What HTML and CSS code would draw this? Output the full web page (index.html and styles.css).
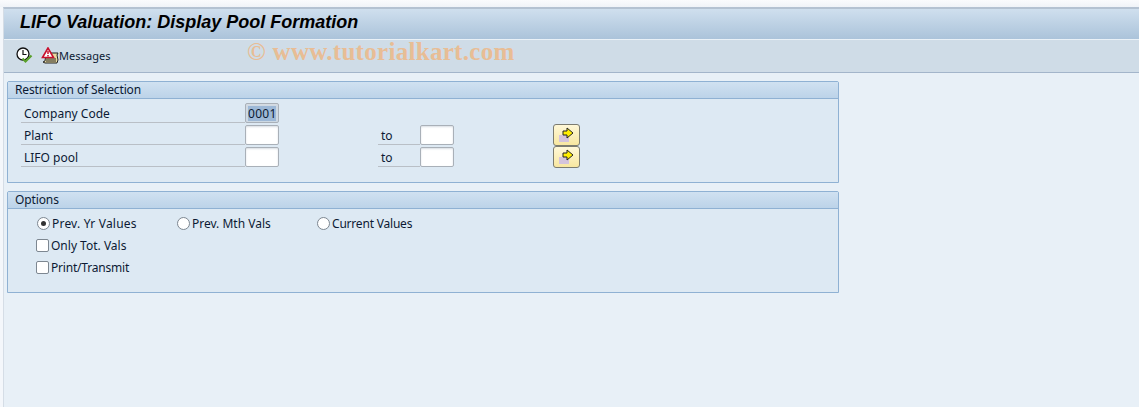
FILE: index.html
```html
<!DOCTYPE html>
<html lang="en">
<head>
<meta charset="utf-8">
<title>LIFO Valuation: Display Pool Formation</title>
<link rel="stylesheet" href="styles.css">
</head>
<body>
<div class="top-strip"></div>
<div class="window">
  <header class="titlebar"><h1 class="title">LIFO Valuation: Display Pool Formation</h1></header>
  <div class="toolbar">
    <svg class="tool-icon clock" width="18" height="18" viewBox="0 0 18 18">
      <circle cx="7" cy="7" r="6" fill="#fff" stroke="#111" stroke-width="1.3"/>
      <path d="M7 3V7.500H10.500" fill="none" stroke="#111" stroke-width="1.2"/>
      <path d="M6.500 11.500l3 3 6-6" fill="none" stroke="#5aa02c" stroke-width="2.200"/>
    </svg>
    <svg class="tool-icon msg" width="18" height="18" viewBox="0 0 18 18">
      <path d="M5 6h12l-1 2 1 5-1 3H4l-2-1 2-1z" fill="#e8d9a0" stroke="#222" stroke-width="1"/>
      <path d="M5 12h10M5 14h10" stroke="#222" stroke-width="1"/>
      <path d="M7 1L1.500 10.500h11z" fill="#fff" stroke="#c8102e" stroke-width="1.600"/>
      <path d="M7 4v3M7 8v1.500" stroke="#c8102e" stroke-width="1.500"/>
    </svg>
    <span class="tool-label">Messages</span>
    <span class="watermark">© www.tutorialkart.com</span>
  </div>
  <main class="content">
    <section class="group group-selection">
      <h2 class="group-head">Restriction of Selection</h2>
      <div class="sel-rows">
        <div class="sel-row">
          <label class="field-label">Company Code</label>
          <div class="input input-filled"><span class="selected">0001</span></div>
        </div>
        <div class="sel-row">
          <label class="field-label">Plant</label>
          <div class="input"></div>
          <label class="to-label">to</label>
          <div class="input"></div>
          <button class="arrow-btn" type="button">
            <svg width="18" height="17" viewBox="0 0 18 17"><rect x="1" y="8" width="10" height="7" fill="#d4c4dc"/><path d="M5 4h4V1l6 5-6 5V8H5z" fill="#ffee00" stroke="#222" stroke-width="1"/></svg>
          </button>
        </div>
        <div class="sel-row">
          <label class="field-label">LIFO pool</label>
          <div class="input"></div>
          <label class="to-label">to</label>
          <div class="input"></div>
          <button class="arrow-btn" type="button">
            <svg width="18" height="17" viewBox="0 0 18 17"><rect x="1" y="8" width="10" height="7" fill="#d4c4dc"/><path d="M5 4h4V1l6 5-6 5V8H5z" fill="#ffee00" stroke="#222" stroke-width="1"/></svg>
          </button>
        </div>
      </div>
    </section>
    <section class="group group-options">
      <h2 class="group-head">Options</h2>
      <div class="opt-rows">
        <div class="opt-row">
          <span class="opt opt-w1"><span class="radio radio-on"></span><span class="wide">Prev. Yr Values</span></span>
          <span class="opt opt-w2"><span class="radio"></span>Prev. Mth Vals</span>
          <span class="opt"><span class="radio"></span><span class="narrow">Current Values</span></span>
        </div>
        <div class="opt-row"><span class="opt"><span class="check"></span>Only Tot. Vals</span></div>
        <div class="opt-row"><span class="opt"><span class="check"></span><span class="narrow">Print/Transmit</span></span></div>
      </div>
    </section>
  </main>
</div>
</body>
</html>
```
FILE: styles.css
```css
* { box-sizing: border-box; }
html, body { margin: 0; padding: 0; height: 100%; overflow: hidden; }
body {
  background: #f4f7fb;
  font-family: "Noto Sans", "DejaVu Sans", sans-serif;
  font-size: 12px;
  color: #0c1a33;
  display: flex;
  flex-direction: column;
}
.top-strip { height: 7px; background: linear-gradient(#fafbfd, #f0f3f8); flex: none; }
.window {
  flex: 1;
  margin-left: 3px;
  border-left: 1px solid #d5dde6;
  border-top: 2px solid #b4c2d2;
  display: flex;
  flex-direction: column;
  background: #e8f0f7;
}
.titlebar {
  height: 31px;
  background: linear-gradient(#cfdfee, #abc3da);
  border-bottom: 1px solid #eaf1f7;
  display: flex;
  align-items: center;
  padding: 0 0 4px 16px;
  flex: none;
}
.title {
  margin: 0;
  font: italic bold 18px "Liberation Sans", Arial, sans-serif;
  color: #000;
}
.toolbar {
  height: 33px;
  background: #cfdce7;
  border-bottom: 1px solid #a3b5ca;
  display: flex;
  align-items: center;
  padding: 0 0 1px 12px;
  position: relative;
  flex: none;
}
.tool-icon { flex: none; }
.msg { margin-left: 7px; }
.tool-label { font-size: 11px; margin-left: 0; letter-spacing: 0.05px; }
.watermark {
  position: absolute;
  left: 243px;
  top: -1px;
  font: bold 25px "Liberation Serif", serif;
  color: #e8bd95;
  line-height: 26px;
  letter-spacing: 0.3px;
}
.content { padding: 8px 0 0 3px; display: flex; flex-direction: column; gap: 8px; }
.group {
  width: 832px;
  height: 102px;
  background: #dde9f3;
  border: 1px solid #8fb1d3;
  border-radius: 2px 2px 0 0;
}
.group-head {
  margin: 0;
  height: 17px;
  font-size: 12px;
  font-weight: 400;
  line-height: 15px;
  padding-left: 7px;
  letter-spacing: -0.12px;
  background: linear-gradient(#d0e1f1, #bcd3e9);
  border-bottom: 1px solid #8fb1d3;
}
.sel-rows { padding: 4px 0 0 13px; display: flex; flex-direction: column; gap: 2px; }
.sel-row { display: flex; height: 20px; align-items: stretch; }
.field-label {
  width: 224px;
  padding-left: 3px;
  border-bottom: 1px solid #b9bfc6;
  line-height: 21px;
}
.to-label {
  width: 42px;
  margin-left: 99px;
  padding-left: 3px;
  border-bottom: 1px solid #b9bfc6;
  line-height: 21px;
}
.input {
  width: 34px;
  height: 20px;
  background: #fff;
  border: 1px solid #a9b0b8;
  border-radius: 2px;
  box-shadow: inset 0 1px 2px #d8dde3;
}
.input-filled { background: #cdd8e3; padding: 2px; line-height: 15px; font-size: 12px; letter-spacing: 0.3px; }
.selected { display: block; background: #9db8d6; height: 15px; }
.arrow-btn {
  width: 27px;
  height: 22px;
  margin: -1px 0 0 99px;
  padding: 0;
  background: linear-gradient(#fff8d8, #f8e7a0);
  border: 1px solid #7c7c70;
  border-radius: 3px;
  display: flex;
  align-items: center;
  justify-content: center;
}
.opt-rows { padding: 4px 0 0 28px; display: flex; flex-direction: column; gap: 2px; }
.opt-row { display: flex; height: 20px; align-items: center; }
.opt { display: inline-flex; align-items: center; }
.opt-w1 { width: 140px; }
.opt-w2 { width: 140px; }
.wide { letter-spacing: 0.2px; }
.narrow { letter-spacing: -0.2px; }
.radio {
  width: 13px;
  height: 13px;
  border: 1px solid #7d8791;
  border-radius: 50%;
  background: #fff;
  margin: 0 2px 0 1px;
  display: flex;
  align-items: center;
  justify-content: center;
}
.radio-on::after { content: ""; width: 5px; height: 5px; border-radius: 50%; background: #333; }
.check {
  width: 13px;
  height: 13px;
  border: 1px solid #7d8791;
  border-radius: 2px;
  background: #fff;
  margin-right: 2px;
}
```
